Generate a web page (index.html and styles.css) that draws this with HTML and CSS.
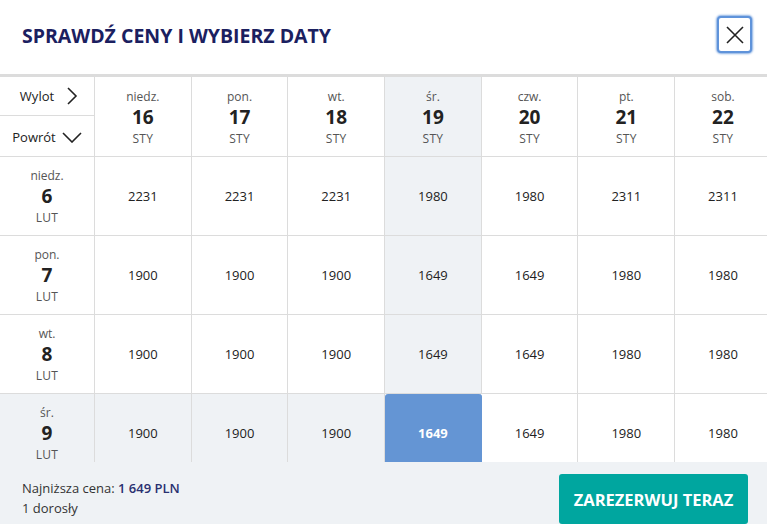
FILE: index.html
```html
<!DOCTYPE html>
<html>
    <head>
        <title>Sprawdź ceny i wybierz daty</title>
        <meta charset="UTF-8">
        <meta name="viewport" content="width=device-width, initial-scale=1.0">
        <link rel="stylesheet" href="styles.css">
    </head>
    <body>
        <div class="modal">
            <div class="modalHeader">
                <h1>SPRAWDŹ CENY I WYBIERZ DATY</h1>
                <button class="closeBtn">
                    <svg width="20" height="20" viewBox="0 0 20 20">
                        <path d="M2 2 L18 18 M18 2 L2 18" stroke="#222" stroke-width="1.6" fill="none"/>
                    </svg>
                </button>
            </div>

            <div class="gridWrap">
                <div class="priceGrid">
                    <!-- header row -->
                    <div class="corner">
                        <div class="dirLabel">Wylot
                            <svg width="12" height="18" viewBox="0 0 12 18"><path d="M2 1 L10 9 L2 17" stroke="#222" stroke-width="1.6" fill="none"/></svg>
                        </div>
                        <div class="dirLabel back">Powrót
                            <svg width="20" height="12" viewBox="0 0 20 12"><path d="M1 2 L10 11 L19 2" stroke="#222" stroke-width="1.6" fill="none"/></svg>
                        </div>
                    </div>
                    <div class="dayHead"><span class="dayName">niedz.</span><span class="dayNum">16</span><span class="month">STY</span></div>
                    <div class="dayHead"><span class="dayName">pon.</span><span class="dayNum">17</span><span class="month">STY</span></div>
                    <div class="dayHead"><span class="dayName">wt.</span><span class="dayNum">18</span><span class="month">STY</span></div>
                    <div class="dayHead hl"><span class="dayName">śr.</span><span class="dayNum">19</span><span class="month">STY</span></div>
                    <div class="dayHead"><span class="dayName">czw.</span><span class="dayNum">20</span><span class="month">STY</span></div>
                    <div class="dayHead"><span class="dayName">pt.</span><span class="dayNum">21</span><span class="month">STY</span></div>
                    <div class="dayHead"><span class="dayName">sob.</span><span class="dayNum">22</span><span class="month">STY</span></div>

                    <!-- return 6 LUT -->
                    <div class="dayHead rowHead"><span class="dayName">niedz.</span><span class="dayNum">6</span><span class="month">LUT</span></div>
                    <div class="price">2231</div>
                    <div class="price">2231</div>
                    <div class="price">2231</div>
                    <div class="price hl">1980</div>
                    <div class="price">1980</div>
                    <div class="price">2311</div>
                    <div class="price">2311</div>

                    <!-- return 7 LUT -->
                    <div class="dayHead rowHead"><span class="dayName">pon.</span><span class="dayNum">7</span><span class="month">LUT</span></div>
                    <div class="price">1900</div>
                    <div class="price">1900</div>
                    <div class="price">1900</div>
                    <div class="price hl">1649</div>
                    <div class="price">1649</div>
                    <div class="price">1980</div>
                    <div class="price">1980</div>

                    <!-- return 8 LUT -->
                    <div class="dayHead rowHead"><span class="dayName">wt.</span><span class="dayNum">8</span><span class="month">LUT</span></div>
                    <div class="price">1900</div>
                    <div class="price">1900</div>
                    <div class="price">1900</div>
                    <div class="price hl">1649</div>
                    <div class="price">1649</div>
                    <div class="price">1980</div>
                    <div class="price">1980</div>

                    <!-- return 9 LUT (selected row) -->
                    <div class="dayHead rowHead hl"><span class="dayName">śr.</span><span class="dayNum">9</span><span class="month">LUT</span></div>
                    <div class="price hl">1900</div>
                    <div class="price hl">1900</div>
                    <div class="price hl">1900</div>
                    <div class="price selected">1649</div>
                    <div class="price">1649</div>
                    <div class="price">1980</div>
                    <div class="price">1980</div>
                </div>
            </div>

            <div class="modalFooter">
                <div class="summary">
                    <div>Najniższa cena: <span class="lowest">1 649 PLN</span></div>
                    <div>1 dorosły</div>
                </div>
                <button class="bookBtn">ZAREZERWUJ TERAZ</button>
            </div>
        </div>
    </body>
</html>
```

FILE: styles.css
```css
body{
    margin: 0;
    background-color: #ffffff;
    font-family: "Open Sans", "Noto Sans", sans-serif;
    color: #222;
}

.modal{
    width: 767px;
    height: 524px;
    display: flex;
    flex-direction: column;
    overflow: hidden;
}

.modalHeader{
    height: 74px;
    display: flex;
    align-items: center;
    justify-content: space-between;
    padding: 0 15px 0 22px;
    box-sizing: border-box;
}
.modalHeader h1{
    margin: 0;
    font-size: 19.5px;
    font-weight: 700;
    color: #1b2060;
    letter-spacing: 0;
    padding-bottom: 2px;
}

/* close button drawn with its focus ring */
.closeBtn{
    width: 35px;
    height: 37px;
    margin-bottom: 4px;
    padding: 0;
    display: flex;
    align-items: center;
    justify-content: center;
    background-color: #fff;
    border: 2px solid #5f93da;
    border-radius: 4px;
    box-shadow: 0 0 2px 1px rgba(95, 147, 218, 0.75);
    outline: none;
    cursor: pointer;
}

.gridWrap{
    height: 386px;
    border-top: 3px solid #dcdcdc;
    overflow: hidden;
}

.priceGrid{
    display: grid;
    grid-template-columns: 95px repeat(7, 96.7px);
    grid-template-rows: 80px repeat(4, 79px);
}

.priceGrid > div{
    border-right: 1px solid #dcdcdc;
    border-bottom: 1px solid #dcdcdc;
    box-sizing: border-box;
}

.corner{
    display: flex;
    flex-direction: column;
}
.dirLabel{
    height: 40px;
    display: flex;
    align-items: center;
    justify-content: center;
    gap: 12px;
    font-size: 13px;
    color: #222;
    padding-left: 4px;
}
.dirLabel.back{
    border-top: 1px solid #dcdcdc;
    gap: 6px;
    padding-left: 0;
    padding-top: 1px;
}

.dayHead{
    display: flex;
    flex-direction: column;
    align-items: center;
    justify-content: center;
    padding-top: 2px;
}
.dayName{
    font-size: 12px;
    line-height: 17px;
    color: #555;
}
.dayNum{
    font-size: 19px;
    line-height: 25px;
    font-weight: 700;
    color: #222;
}
.month{
    font-size: 12px;
    line-height: 17px;
    color: #555;
    letter-spacing: 0.3px;
}

.price{
    display: flex;
    align-items: center;
    justify-content: center;
    font-size: 13px;
    color: #222;
    padding-top: 1px;
}

.hl{
    background-color: #eff2f5;
}

.priceGrid > .selected{
    background-color: #6495d4;
    color: #fff;
    font-weight: 700;
    border-radius: 3px 3px 0 0;
    border-color: #6495d4;
}

.modalFooter{
    flex: 1;
    display: flex;
    align-items: center;
    justify-content: space-between;
    background-color: #eff2f5;
    padding: 0 19px 0 22px;
}
.summary{
    font-size: 13px;
    color: #333;
    line-height: 20px;
    margin-top: 10px;
}
.lowest{
    color: #2a3070;
    font-weight: 600;
}

.bookBtn{
    width: 189px;
    height: 50px;
    margin-top: 12px;
    background-color: #00a69f;
    color: #fff;
    border: none;
    border-radius: 3px;
    font-family: "Open Sans", "Noto Sans", sans-serif;
    font-size: 16.5px;
    font-weight: 700;
    cursor: pointer;
}
```
